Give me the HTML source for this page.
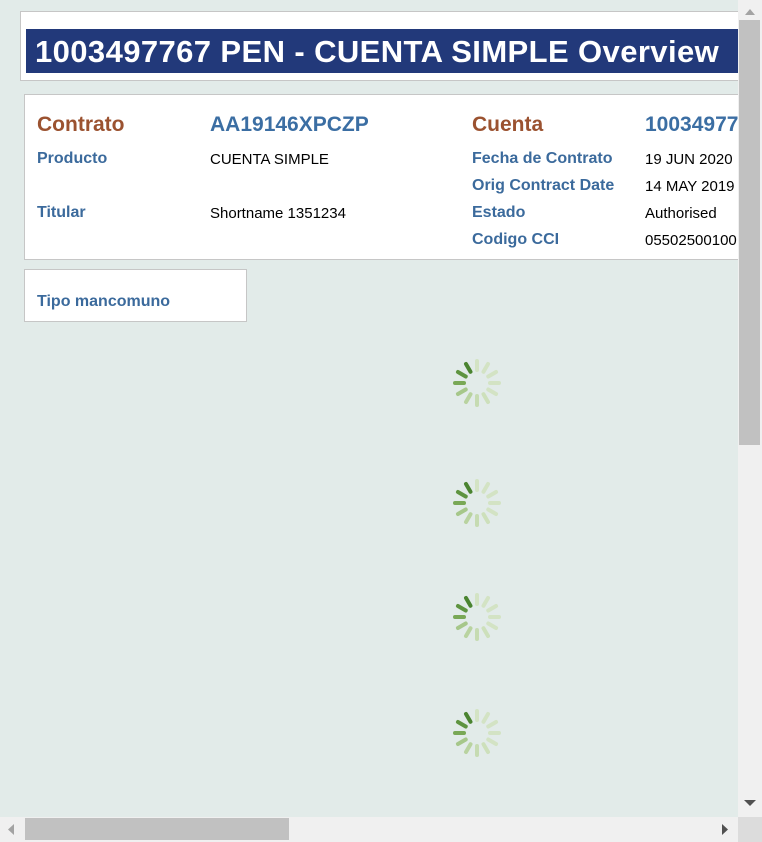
<!DOCTYPE html>
<html><head><style>
*{margin:0;padding:0;box-sizing:border-box}
body{width:762px;height:842px;overflow:hidden;background:#e2ebe9;font-family:"Liberation Sans",sans-serif;position:relative}
.clip{position:absolute;left:0;top:0;width:738px;height:817px;overflow:hidden}
.a{position:absolute;white-space:nowrap}
.box{position:absolute;background:#fff;border:1px solid #c6c6c6}
.lbl{color:#3b6a9c;font-weight:bold;font-size:16px}
.val{color:#000;font-size:15px}
.h{font-weight:bold;font-size:21px}
</style></head><body>
<div class="clip">
 <div class="box" style="left:20px;top:11px;width:760px;height:70px"></div>
 <div class="a" style="left:26px;top:29px;width:760px;height:44px;background:#22397a"></div>
 <div class="a" style="left:35px;top:34px;color:#fff;font-weight:bold;font-size:31px;letter-spacing:0.4px">1003497767 PEN - CUENTA SIMPLE Overview</div>
 <div class="box" style="left:24px;top:94px;width:760px;height:166px"></div>
 <div class="a h" style="left:37px;top:113px;color:#9b5230">Contrato</div>
 <div class="a h" style="left:210px;top:113px;color:#3b6ea3">AA19146XPCZP</div>
 <div class="a lbl" style="left:37px;top:150px">Producto</div>
 <div class="a val" style="left:210px;top:151px">CUENTA SIMPLE</div>
 <div class="a lbl" style="left:37px;top:204px">Titular</div>
 <div class="a val" style="left:210px;top:205px">Shortname 1351234</div>
 <div class="a h" style="left:472px;top:113px;color:#9b5230">Cuenta</div>
 <div class="a h" style="left:645px;top:113px;color:#3b6ea3">1003497767</div>
 <div class="a lbl" style="left:472px;top:150px">Fecha de Contrato</div>
 <div class="a val" style="left:645px;top:151px">19 JUN 2020</div>
 <div class="a lbl" style="left:472px;top:177px">Orig Contract Date</div>
 <div class="a val" style="left:645px;top:178px">14 MAY 2019</div>
 <div class="a lbl" style="left:472px;top:204px">Estado</div>
 <div class="a val" style="left:645px;top:205px">Authorised</div>
 <div class="a lbl" style="left:472px;top:231px">Codigo CCI</div>
 <div class="a val" style="left:645px;top:232px">05502500100</div>
 <div class="box" style="left:24px;top:269px;width:223px;height:53px"></div>
 <div class="a lbl" style="left:37px;top:293px">Tipo mancomuno</div>
</div>
<svg width="762" height="842" style="position:absolute;left:0;top:0">
 <defs>
  <g id="sp">
   <g stroke-linecap="round" stroke-width="4">
    <line x1="0" y1="-13" x2="0" y2="-22" stroke="#d3e3c4" transform="rotate(0)"/>
    <line x1="0" y1="-13" x2="0" y2="-22" stroke="#d3e3c4" transform="rotate(30)"/>
    <line x1="0" y1="-13" x2="0" y2="-22" stroke="#d3e3c4" transform="rotate(60)"/>
    <line x1="0" y1="-13" x2="0" y2="-22" stroke="#d3e3c4" transform="rotate(90)"/>
    <line x1="0" y1="-13" x2="0" y2="-22" stroke="#d3e3c4" transform="rotate(120)"/>
    <line x1="0" y1="-13" x2="0" y2="-22" stroke="#cde0bb" transform="rotate(150)"/>
    <line x1="0" y1="-13" x2="0" y2="-22" stroke="#c6dbb2" transform="rotate(180)"/>
    <line x1="0" y1="-13" x2="0" y2="-22" stroke="#b9d3a0" transform="rotate(210)"/>
    <line x1="0" y1="-13" x2="0" y2="-22" stroke="#a6c78a" transform="rotate(240)"/>
    <line x1="0" y1="-13" x2="0" y2="-22" stroke="#79a856" transform="rotate(270)"/>
    <line x1="0" y1="-13" x2="0" y2="-22" stroke="#5e9440" transform="rotate(300)"/>
    <line x1="0" y1="-13" x2="0" y2="-22" stroke="#4a8430" transform="rotate(330)"/>
   </g>
  </g>
 </defs>
 <use href="#sp" x="477" y="383"/>
 <use href="#sp" x="477" y="503"/>
 <use href="#sp" x="477" y="617"/>
 <use href="#sp" x="477" y="733"/>
 <rect x="738" y="0" width="24" height="817" fill="#f0f0f0"/>
 <rect x="739" y="20" width="21" height="425" fill="#c1c1c1"/>
 <path d="M745 15 L750 9 L755 15Z" fill="#a3a3a3"/>
 <path d="M744 800 L750 806 L756 800Z" fill="#505050"/>
 <rect x="0" y="817" width="738" height="25" fill="#f0f0f0"/>
 <rect x="25" y="818" width="264" height="22" fill="#c1c1c1"/>
 <path d="M14 824 L8 829.5 L14 835Z" fill="#a3a3a3"/>
 <path d="M722 824 L728 829.5 L722 835Z" fill="#505050"/>
 <rect x="738" y="817" width="24" height="25" fill="#dcdcdc"/>
</svg>
</body></html>
